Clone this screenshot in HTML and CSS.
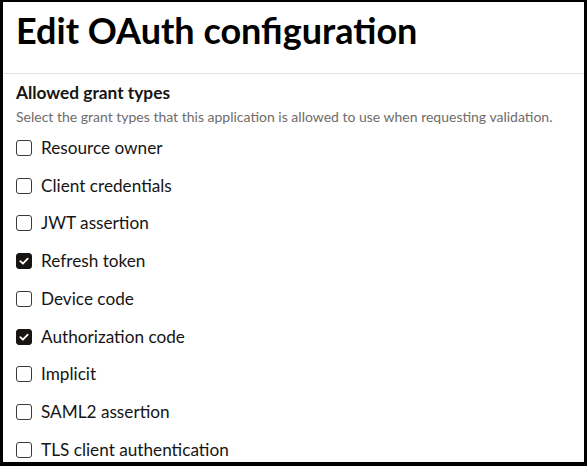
FILE: index.html
```
<!DOCTYPE html>
<html>
<head>
<meta charset="utf-8">
<link rel="stylesheet" href="styles.css">
</head>
<body>
<div class="frame">
  <header class="header">
    <h1 class="title">Edit OAuth configuration</h1>
  </header>
  <section class="section">
    <h2 class="section-title">Allowed grant types</h2>
    <p class="section-desc">Select the grant types that this application is allowed to use when requesting validation.</p>
    <ul class="options">
      <li class="option"><span class="box"></span><span class="label">Resource owner</span></li>
      <li class="option"><span class="box"></span><span class="label">Client credentials</span></li>
      <li class="option"><span class="box"></span><span class="label">JWT assertion</span></li>
      <li class="option"><span class="box checked"><svg viewBox="0 0 16 16" width="16" height="16"><path d="M4.3 8.2 L6.9 10.7 L11.7 5.6" fill="none" stroke="#fff" stroke-width="1.8" stroke-linecap="round" stroke-linejoin="round"/></svg></span><span class="label">Refresh token</span></li>
      <li class="option"><span class="box"></span><span class="label">Device code</span></li>
      <li class="option"><span class="box checked"><svg viewBox="0 0 16 16" width="16" height="16"><path d="M4.3 8.2 L6.9 10.7 L11.7 5.6" fill="none" stroke="#fff" stroke-width="1.8" stroke-linecap="round" stroke-linejoin="round"/></svg></span><span class="label">Authorization code</span></li>
      <li class="option"><span class="box"></span><span class="label">Implicit</span></li>
      <li class="option"><span class="box"></span><span class="label">SAML2 assertion</span></li>
      <li class="option"><span class="box"></span><span class="label">TLS client authentication</span></li>
    </ul>
  </section>
</div>
</body>
</html>
```
FILE: styles.css
```
html, body {
  margin: 0;
  padding: 0;
  background: #fff;
}
body {
  font-family: Lato, "Noto Sans", sans-serif;
  color: #161513;
}
.frame {
  box-sizing: border-box;
  width: 587px;
  height: 466px;
  border: 3px solid #000;
  border-top-width: 2px;
  border-bottom-width: 4px;
  overflow: hidden;
  background: #fff;
}
.header {
  height: 71px;
  border-bottom: 1px solid #e3e3e3;
  padding: 0 13px;
}
.title {
  margin: 0;
  padding-top: 6px;
  font-size: 36px;
  line-height: 44px;
  font-weight: 700;
  color: #000;
  white-space: nowrap;
}
.section {
  padding: 8px 13px 0;
}
.section-title {
  margin: 0;
  font-size: 17.3px;
  line-height: 22px;
  font-weight: 700;
  color: #161513;
}
.section-desc {
  margin: 3px 0 0;
  font-size: 14px;
  line-height: 20px;
  color: #6f6c69;
  white-space: nowrap;
}
.options {
  list-style: none;
  margin: 2px 0 0;
  padding: 0;
}
.option {
  display: flex;
  align-items: center;
  gap: 9px;
  height: 37.75px;
}
.box {
  box-sizing: border-box;
  width: 16px;
  height: 16px;
  border: 1.5px solid #3a3a3a;
  border-radius: 3px;
  display: flex;
  align-items: center;
  justify-content: center;
  flex: none;
}
.box.checked {
  background: #161513;
  border-color: #161513;
}
.box svg {
  display: block;
  flex: none;
}
.label {
  font-size: 17.2px;
  line-height: 20px;
  color: #161513;
}
```
